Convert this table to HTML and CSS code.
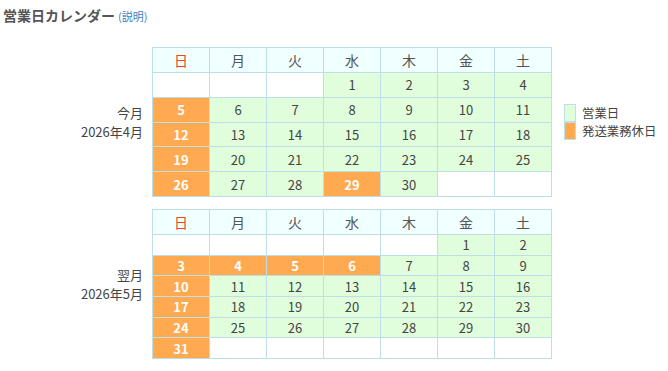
FILE: index.html
```html
<!DOCTYPE html>
<html lang="ja">
<head>
<meta charset="utf-8">
<link rel="stylesheet" href="styles.css">
</head>
<body>
<div class="page">
  <div class="title"><span class="title-main">営業日カレンダー</span> <a class="help" href="#">(説明)</a></div>
  <div class="months">
    <div class="month">
      <div class="label"><div>今月</div><div>2026年4月</div></div>
      <div class="cal rows5">
        <div class="h sun">日</div><div class="h">月</div><div class="h">火</div><div class="h">水</div><div class="h">木</div><div class="h">金</div><div class="h">土</div>
        <div class="e"></div><div class="e"></div><div class="e"></div><div class="b">1</div><div class="b">2</div><div class="b">3</div><div class="b">4</div>
        <div class="o">5</div><div class="b">6</div><div class="b">7</div><div class="b">8</div><div class="b">9</div><div class="b">10</div><div class="b">11</div>
        <div class="o">12</div><div class="b">13</div><div class="b">14</div><div class="b">15</div><div class="b">16</div><div class="b">17</div><div class="b">18</div>
        <div class="o">19</div><div class="b">20</div><div class="b">21</div><div class="b">22</div><div class="b">23</div><div class="b">24</div><div class="b">25</div>
        <div class="o">26</div><div class="b">27</div><div class="b">28</div><div class="o">29</div><div class="b">30</div><div class="e"></div><div class="e"></div>
      </div>
      <div class="legend">
        <div class="legend-item"><span class="sw sw-b"></span><span>営業日</span></div>
        <div class="legend-item"><span class="sw sw-o"></span><span>発送業務休日</span></div>
      </div>
    </div>
    <div class="month">
      <div class="label"><div>翌月</div><div>2026年5月</div></div>
      <div class="cal rows6">
        <div class="h sun">日</div><div class="h">月</div><div class="h">火</div><div class="h">水</div><div class="h">木</div><div class="h">金</div><div class="h">土</div>
        <div class="e"></div><div class="e"></div><div class="e"></div><div class="e"></div><div class="e"></div><div class="b">1</div><div class="b">2</div>
        <div class="o">3</div><div class="o">4</div><div class="o">5</div><div class="o">6</div><div class="b">7</div><div class="b">8</div><div class="b">9</div>
        <div class="o">10</div><div class="b">11</div><div class="b">12</div><div class="b">13</div><div class="b">14</div><div class="b">15</div><div class="b">16</div>
        <div class="o">17</div><div class="b">18</div><div class="b">19</div><div class="b">20</div><div class="b">21</div><div class="b">22</div><div class="b">23</div>
        <div class="o">24</div><div class="b">25</div><div class="b">26</div><div class="b">27</div><div class="b">28</div><div class="b">29</div><div class="b">30</div>
        <div class="o">31</div><div class="e"></div><div class="e"></div><div class="e"></div><div class="e"></div><div class="e"></div><div class="e"></div>
      </div>
    </div>
  </div>
</div>
</body>
</html>
```
FILE: styles.css
```css
* { box-sizing: border-box; }
html, body { margin: 0; padding: 0; background: #fff; }
body {
  font-family: "Noto Sans CJK JP", "Noto Sans", sans-serif;
  color: #444;
  font-size: 13px;
}
.page { width: 668px; }
.title {
  height: 47px;
  padding: 5px 3px 0;
  line-height: 20px;
}
.title-main {
  font-size: 14px;
  font-weight: bold;
  color: #555;
}
.help {
  font-size: 11px;
  color: #3d7fbf;
  text-decoration: none;
}
.months {
  display: flex;
  flex-direction: column;
  gap: 12px;
}
.month {
  display: flex;
  align-items: center;
}
.label {
  width: 143px;
  margin-right: 9px;
  text-align: right;
  line-height: 19px;
  font-size: 13px;
  color: #444;
}
.cal {
  width: 400px;
  height: 150px;
  display: grid;
  grid-template-columns: repeat(7, 56px);
  gap: 1px;
  padding: 1px;
  background: #bfdfe8;
}
.rows5 { grid-template-rows: 24px repeat(5, 1fr); }
.rows6 { grid-template-rows: 24px repeat(6, 1fr); }
.cal > div {
  display: flex;
  align-items: center;
  justify-content: center;
  font-size: 13px;
  color: #444;
}
.cal > .h { background: #f0ffff; font-size: 14px; color: #555; }
.cal > .h.sun { color: #f4421c; }
.cal > .e { background: #fff; }
.cal > .b { background: #e0fedc; }
.cal > .o { background: #ffa951; color: #fff; font-weight: bold; }
.legend {
  margin-left: 12px;
  display: flex;
  flex-direction: column;
  font-size: 12.4px;
  line-height: 18px;
  color: #444;
}
.legend-item {
  display: flex;
  align-items: center;
  gap: 6px;
  height: 18px;
}
.sw {
  display: block;
  width: 12px;
  height: 18px;
  border: 1px solid #bfdfe8;
}
.sw-b { background: #e0fedc; }
.sw-o { background: #ffa951; }
```
